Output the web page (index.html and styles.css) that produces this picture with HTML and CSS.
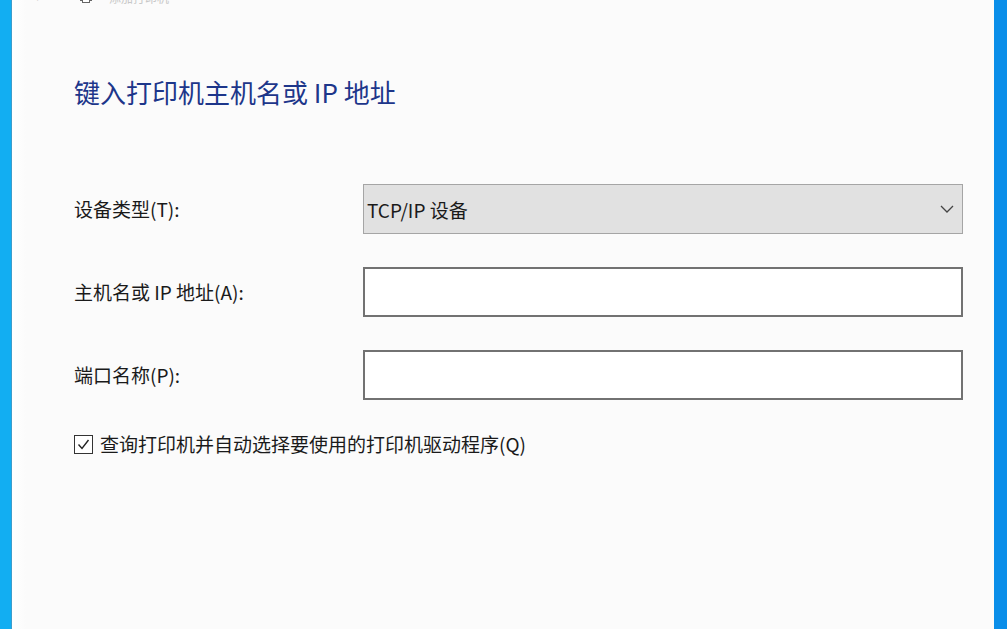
FILE: index.html
```html
<!DOCTYPE html>
<html>
<head>
  <meta charset="utf-8">
  <title>添加打印机</title>
  <link rel="stylesheet" href="styles.css">
</head>
<body>
<div class="window">
  <div class="frame-edge left"></div>
  <div class="dialog">
    <div class="titlebar">
      <span class="back">&#8592;</span>
      <svg class="printer" width="14" height="14" viewBox="0 0 14 14">
        <rect x="1.5" y="4.5" width="11" height="6" fill="none" stroke="#666" stroke-width="1"/>
        <rect x="3.5" y="8.5" width="7" height="4" fill="#fff" stroke="#666" stroke-width="1"/>
      </svg>
      <span class="title">添加打印机</span>
    </div>

    <h1 class="instruction">键入打印机主机名或 IP 地址</h1>

    <div class="form">
      <label class="label">设备类型(T):</label>
      <div class="select">
        <span>TCP/IP 设备</span>
        <svg class="chevron" width="14" height="8" viewBox="0 0 14 8">
          <polyline points="1,1 7,7 13,1" fill="none" stroke="#444" stroke-width="1.3"/>
        </svg>
      </div>

      <label class="label">主机名或 IP 地址(A):</label>
      <div class="textbox"></div>

      <label class="label">端口名称(P):</label>
      <div class="textbox"></div>
    </div>

    <div class="check-row">
      <span class="checkbox">
        <svg width="15" height="15" viewBox="0 0 15 15">
          <polyline points="2.5,7.5 6,11.5 12.5,3" fill="none" stroke="#222" stroke-width="1.4"/>
        </svg>
      </span>
      <span class="check-label">查询打印机并自动选择要使用的打印机驱动程序(Q)</span>
    </div>
  </div>
  <div class="frame-edge right"></div>
</div>
</body>
</html>
```

FILE: styles.css
```css
html, body {
    margin: 0;
    padding: 0;
    height: 100%;
    overflow: hidden;
}

body {
    font-family: "Noto Sans CJK SC", "Noto Sans", sans-serif;
    background-color: #0b8fe9;
}

.window {
    display: flex;
    width: 100%;
    height: 100%;
}

.frame-edge.left {
    flex: 0 0 11px;
    background-color: #12aef2;
    border-right: 1px solid #3d9dcc;
}

.frame-edge.right {
    flex: 0 0 13px;
    background-color: #0a8ee9;
}

.dialog {
    flex: 1 1 auto;
    min-width: 0;
    overflow: hidden;
    background: linear-gradient(to right, #ffffff 0px, #fbfbfb 14px);
    padding-left: 62px;
    color: #1a1a1a;
}

.titlebar {
    display: flex;
    align-items: center;
    height: 14px;
    margin-top: -10px;
    color: #999999;
    font-size: 12px;
}

.back {
    margin-left: -40px;
    width: 40px;
    color: #bbbbbb;
}

.printer {
    margin-left: 5px;
}

.title {
    margin-left: 16px;
    color: #c8c8c8;
}

.instruction {
    margin: 70px 0 0 0;
    font-size: 26px;
    line-height: 36px;
    font-weight: normal;
    color: #1d368a;
}

.form {
    display: grid;
    grid-template-columns: 289px 600px;
    row-gap: 33px;
    margin-top: 74px;
    align-items: center;
}

.label {
    font-size: 19px;
    line-height: 26px;
}

.select {
    box-sizing: border-box;
    height: 50px;
    background-color: #e1e1e1;
    border: 1px solid #a5a5a5;
    display: flex;
    align-items: center;
    justify-content: space-between;
    padding: 0 8px 0 3px;
    font-size: 19px;
}

.textbox {
    box-sizing: border-box;
    height: 50px;
    background-color: #ffffff;
    border: 2px solid #727272;
}

.check-row {
    display: flex;
    align-items: center;
    margin-top: 31px;
    height: 26px;
}

.checkbox {
    box-sizing: border-box;
    width: 19px;
    height: 19px;
    border: 1.5px solid #333333;
    background-color: #ffffff;
    display: flex;
    align-items: center;
    justify-content: center;
}

.check-label {
    margin-left: 7px;
    font-size: 19px;
    line-height: 26px;
}
```
